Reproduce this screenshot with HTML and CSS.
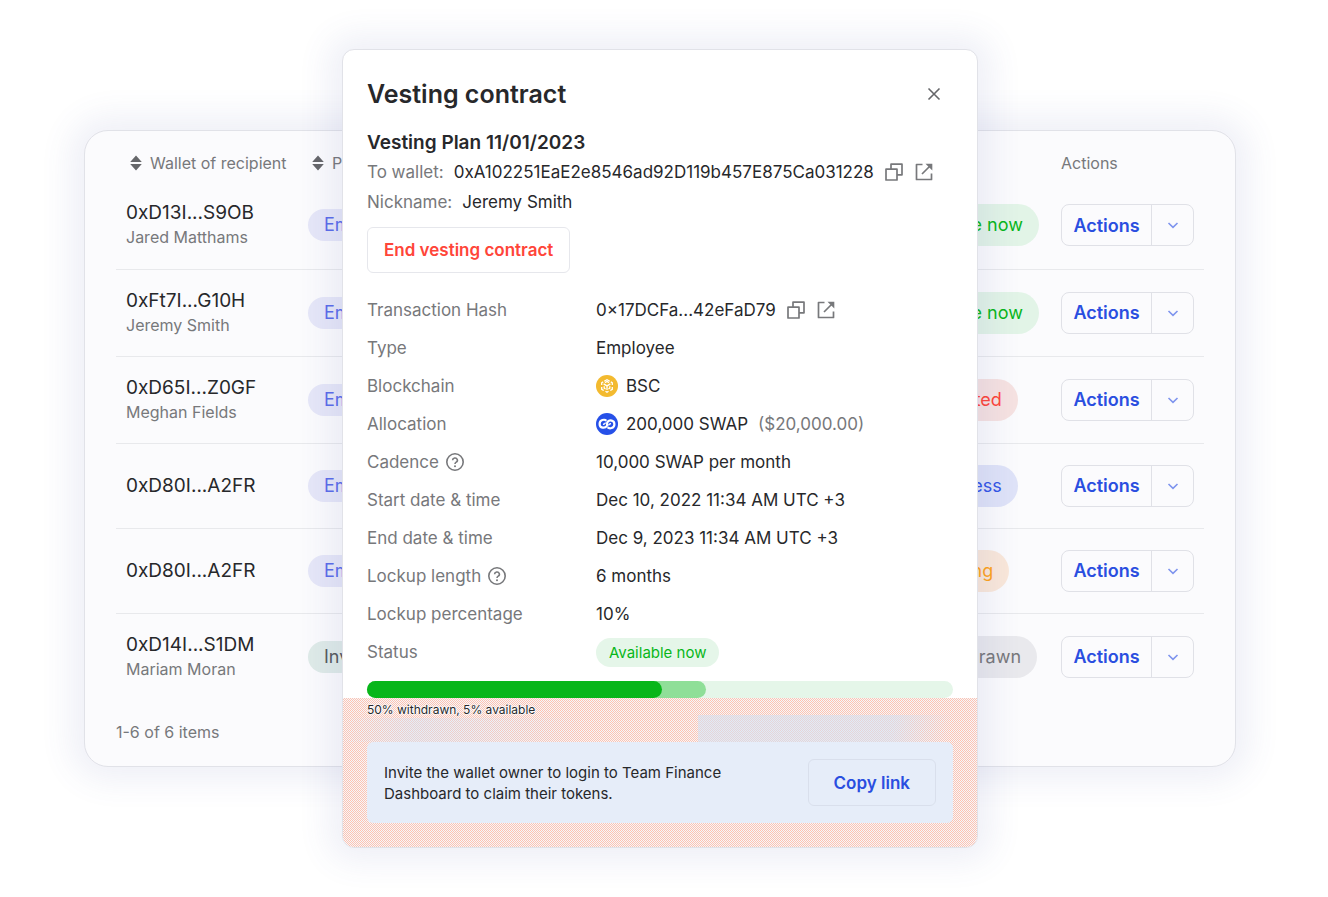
FILE: index.html
```
<!DOCTYPE html>
<html lang="en">

<head>
    <meta charset="UTF-8">
    <meta name="viewport" content="width=device-width, initial-scale=1.0">
    <title>Vesting contract</title>
    <link rel="stylesheet" href="styles.css">
</head>

<body>
    <!-- shared icons -->
    <svg class="sprite" aria-hidden="true">
        <symbol id="sort" viewBox="0 0 12 16">
            <path d="M6 0.500L11.800 7H.2zM6 15.500L.2 9h11.600z" fill="currentColor" />
        </symbol>
        <symbol id="chevron" viewBox="0 0 12 12">
            <path d="M1.500 4L6 8.300 10.500 4" fill="none" stroke="currentColor" stroke-width="1.600" />
        </symbol>
        <symbol id="copy" viewBox="0 0 20 20">
            <path d="M7 7V2.200h11v10.600h-4.800M2 7.200h11V18H2z" fill="none" stroke="currentColor" stroke-width="1.700" stroke-linejoin="round" />
        </symbol>
        <symbol id="open" viewBox="0 0 20 20">
            <path d="M8.500 2.500H2.500v15h15V11.500M8 12l8-8" fill="none" stroke="currentColor" stroke-width="1.700" stroke-linejoin="round" />
            <path d="M11.500 1.700H18.300V8.500z" fill="currentColor" />
        </symbol>
        <symbol id="help" viewBox="0 0 20 20">
            <circle cx="10" cy="10" r="8.200" fill="none" stroke="currentColor" stroke-width="1.600" />
            <path d="M7.600 8.200a2.400 2.200 0 1 1 3.600 1.900c-.9.6-1.200.9-1.200 1.900" fill="none" stroke="currentColor" stroke-width="1.600" />
            <circle cx="10" cy="14.200" r="1" fill="currentColor" />
        </symbol>
    </svg>

    <div class="scene">
        <section class="card">
            <table class="recipients">
                <colgroup>
                    <col class="col-wallet">
                    <col>
                    <col class="col-status">
                    <col class="col-actions">
                </colgroup>
                <thead>
                    <tr>
                        <th><span class="sort"><svg><use href="#sort" /></svg>Wallet of recipient</span></th>
                        <th><span class="sort"><svg><use href="#sort" /></svg>Plan</span></th>
                        <th></th>
                        <th>Actions</th>
                    </tr>
                </thead>
                <tbody>
                    <tr class="named">
                        <td class="wallet">0xD13I...S9OB<small>Jared Matthams</small></td>
                        <td><span class="tag">Emp</span></td>
                        <td><span class="state green">Available now</span></td>
                        <td><div class="split"><button>Actions</button><button aria-label="More actions"><svg><use href="#chevron" /></svg></button></div></td>
                    </tr>
                    <tr class="named">
                        <td class="wallet">0xFt7I...G10H<small>Jeremy Smith</small></td>
                        <td><span class="tag">Emp</span></td>
                        <td><span class="state green">Available now</span></td>
                        <td><div class="split"><button>Actions</button><button aria-label="More actions"><svg><use href="#chevron" /></svg></button></div></td>
                    </tr>
                    <tr class="named">
                        <td class="wallet">0xD65I...Z0GF<small>Meghan Fields</small></td>
                        <td><span class="tag">Emp</span></td>
                        <td><span class="state red">Terminated</span></td>
                        <td><div class="split"><button>Actions</button><button aria-label="More actions"><svg><use href="#chevron" /></svg></button></div></td>
                    </tr>
                    <tr>
                        <td class="wallet">0xD80I...A2FR</td>
                        <td><span class="tag">Emp</span></td>
                        <td><span class="state blue">In progress</span></td>
                        <td><div class="split"><button>Actions</button><button aria-label="More actions"><svg><use href="#chevron" /></svg></button></div></td>
                    </tr>
                    <tr>
                        <td class="wallet">0xD80I...A2FR</td>
                        <td><span class="tag">Emp</span></td>
                        <td><span class="state orange">Upcoming</span></td>
                        <td><div class="split"><button>Actions</button><button aria-label="More actions"><svg><use href="#chevron" /></svg></button></div></td>
                    </tr>
                    <tr class="named">
                        <td class="wallet">0xD14I...S1DM<small>Mariam Moran</small></td>
                        <td><span class="tag investor">Inv</span></td>
                        <td><span class="state grey">All withdrawn</span></td>
                        <td><div class="split"><button>Actions</button><button aria-label="More actions"><svg><use href="#chevron" /></svg></button></div></td>
                    </tr>
                </tbody>
            </table>
            <p class="count">1-6 of 6 items</p>
        </section>

        <section class="modal" role="dialog" aria-labelledby="title">
            <div class="modal-main">
                <header class="modal-head">
                    <h1 id="title">Vesting contract</h1>
                    <button class="close" aria-label="Close">
                        <svg viewBox="0 0 14 14"><path d="M1.500 1.500l11 11M12.500 1.500l-11 11" stroke="currentColor" stroke-width="1.600" /></svg>
                    </button>
                </header>
                <h2>Vesting Plan 11/01/2023</h2>
                <p class="line"><span class="muted">To wallet:</span> <span>0xA102251EaE2e8546ad92D119b457E875Ca031228</span>
                    <button class="icon" aria-label="Copy"><svg><use href="#copy" /></svg></button>
                    <button class="icon" aria-label="Open"><svg><use href="#open" /></svg></button>
                </p>
                <p class="line"><span class="muted">Nickname:</span> <span>Jeremy Smith</span></p>
                <button class="end">End vesting contract</button>

                <dl class="details">
                    <dt>Transaction Hash</dt>
                    <dd>0×17DCFa...42eFaD79
                        <button class="icon" aria-label="Copy"><svg><use href="#copy" /></svg></button>
                        <button class="icon" aria-label="Open"><svg><use href="#open" /></svg></button>
                    </dd>
                    <dt>Type</dt>
                    <dd>Employee</dd>
                    <dt>Blockchain</dt>
                    <dd>
                        <svg class="coin" viewBox="0 0 22 22">
                            <circle cx="11" cy="11" r="11" fill="#f3ba2f" />
                            <g fill="none" stroke="#fff" stroke-width="1.300">
                                <path d="M8.200 6.300L11 4.700l2.800 1.600M5.700 10V7.800l1.500-.9M16.300 10V7.800l-1.500-.9M5.700 12v2.300l2 1.200M16.300 12v2.300l-2 1.200M9.500 16.300l1.500.9 1.500-.9" />
                                <path d="M7.600 8.900L11 10.900l3.400-2M11 10.900v4.200M9 7.600l2-1.100 2 1.100M8.200 11.300v1.900l1.400.8M13.800 11.300v1.900l-1.400.8" />
                            </g>
                        </svg>
                        BSC
                    </dd>
                    <dt>Allocation</dt>
                    <dd>
                        <svg class="coin" viewBox="0 0 22 22">
                            <circle cx="11" cy="11" r="11" fill="#2650e8" />
                            <path d="M10.400 7.800C8.700 5.900 3.600 6.600 3.600 10.900c0 4.400 5.400 4.600 7.100 2.200 1-1.500-.3-2.800 1-4.400C13.500 6.600 18.400 7.200 18.400 11.200c0 4.300-5.100 4.900-6.800 3" fill="none" stroke="#fff" stroke-width="2.200" />
                            <path d="M7 11.200c1.200.3 2-.6 2.600-1.500M15 10.800c-1.200-.3-2 .6-2.600 1.500" fill="none" stroke="#fff" stroke-width="1.300" />
                        </svg>
                        200,000 SWAP <span class="muted">($20,000.00)</span>
                    </dd>
                    <dt>Cadence <svg><use href="#help" /></svg></dt>
                    <dd>10,000 SWAP per month</dd>
                    <dt>Start date &amp; time</dt>
                    <dd>Dec 10, 2022 11:34 AM UTC +3</dd>
                    <dt>End date &amp; time</dt>
                    <dd>Dec 9, 2023 11:34 AM UTC +3</dd>
                    <dt>Lockup length <svg><use href="#help" /></svg></dt>
                    <dd>6 months</dd>
                    <dt>Lockup percentage</dt>
                    <dd>10%</dd>
                    <dt>Status</dt>
                    <dd><span class="available">Available now</span></dd>
                </dl>

                <div class="progress">
                    <div class="progress-available" style="width: 57.800%"></div>
                    <div class="progress-withdrawn" style="width: 50.300%"></div>
                </div>
            </div>

            <footer class="modal-foot">
                <p class="caption">50% withdrawn, 5% available</p>
                <div class="invite">
                    <p>Invite the wallet owner to login to Team Finance Dashboard to claim their tokens.</p>
                    <button class="copy-link">Copy link</button>
                </div>
            </footer>
        </section>
    </div>
</body>

</html>
```
FILE: styles.css
```
* {
    box-sizing: border-box;
}

body {
    margin: 0;
    background: #fff;
    color: #27282b;
    font-family: Inter, "Liberation Sans", sans-serif;
    font-size: 17px;
}

h1, h2, p, dl, dd {
    margin: 0;
}

button {
    font: inherit;
    background: none;
    border: 0;
    padding: 0;
    cursor: pointer;
}

.sprite {
    display: none;
}

.muted {
    color: #77787b;
}

/* card and modal share one grid cell, the modal lies on top */
.scene {
    display: grid;
    grid-template-columns: minmax(0, 1fr);
    place-items: center;
    min-height: 100vh;
    padding: 0 8px 0 0;
}

.card, .modal {
    grid-area: 1 / 1;
    border: 1px solid #e1e2e8;
    box-shadow: 0 0 32px 14px rgba(80, 90, 165, 0.09);
}

.card {
    width: calc(100% - 168px);
    max-width: 1152px;
    padding: 0 31px 22px;
    background: #fbfbfd;
    border-radius: 24px;
}

/* table */
.recipients {
    width: 100%;
    table-layout: fixed;
    border-collapse: collapse;
}

.col-wallet {
    width: 192px;
}

.col-status {
    width: 171px;
}

.col-actions {
    width: 143px;
}

th {
    padding: 22px 0 9px;
    font-size: 16px;
    font-weight: 400;
    line-height: 20px;
    text-align: left;
    color: #77787b;
}

.sort {
    display: flex;
    align-items: center;
    gap: 8px;
    padding-left: 4px;
}

th:first-child .sort {
    padding-left: 14px;
}

.sort svg {
    width: 12px;
    height: 16px;
    color: #66676a;
}

td {
    height: 85px;
    padding: 0;
    vertical-align: middle;
}

.named td {
    height: 87px;
}

tbody tr + tr {
    border-top: 1px solid #e8e9ec;
}

.wallet {
    padding-left: 10px;
    font-size: 19px;
    line-height: 24px;
}

.wallet small {
    display: block;
    font-size: 16px;
    color: #77787b;
}

.tag, .state {
    display: inline-block;
    padding: 0 16px;
    border-radius: 22px;
    font-size: 18px;
    vertical-align: middle;
}

.tag {
    line-height: 32px;
    background: #e6e7f8;
    color: #5a6cea;
}

.investor {
    background: #dfebe8;
    color: #55595c;
}

.state {
    line-height: 42px;
}

.green {
    background: #e2f4e7;
    color: #08b61a;
}

.red {
    background: #f6e2e1;
    color: #ff4539;
}

.blue {
    background: #dfe3f8;
    color: #3355e6;
}

.orange {
    background: #fae8da;
    color: #ffa21a;
}

.grey {
    background: #e9e9ed;
    color: #77787b;
}

.split {
    display: flex;
    width: 133px;
    height: 42px;
    border: 1px solid #e0e1e7;
    border-radius: 8px;
}

.split button:first-child {
    width: 90px;
    font-size: 18px;
    font-weight: 600;
    color: #2a4ee0;
    border-right: 1px solid #e0e1e7;
}

.split button:last-child {
    display: grid;
    flex: 1;
    place-items: center;
    color: #7e94ee;
}

.split svg {
    width: 12px;
    height: 12px;
}

.count {
    margin-top: 20px;
    font-size: 16px;
    line-height: 24px;
    color: #77787b;
}

/* modal */
.modal {
    width: 636px;
    max-width: 100%;
    background: #fff;
    border-radius: 12px;
    overflow: hidden;
}

.modal-main {
    padding: 24px 24px 0;
}

.modal-head {
    display: flex;
    align-items: center;
    justify-content: space-between;
    padding-right: 12px;
    margin-bottom: 15px;
}

h1 {
    font-size: 25px;
    font-weight: 600;
    line-height: 40px;
}

.close {
    display: flex;
    color: #66676a;
}

.close svg {
    width: 14px;
    height: 14px;
}

h2 {
    font-size: 19px;
    font-weight: 600;
    line-height: 28px;
}

.line {
    display: flex;
    align-items: center;
    gap: 10px;
    line-height: 30px;
}

.icon {
    display: flex;
    color: #77787b;
}

.icon svg, .details dt svg {
    width: 20px;
    height: 20px;
}

.end {
    height: 46px;
    margin: 10px 0 18px;
    padding: 0 16px;
    border: 1px solid #e6e7ec;
    border-radius: 6px;
    font-weight: 600;
    color: #ff4539;
}

.details {
    display: grid;
    grid-template-columns: 229px 1fr;
    grid-auto-rows: 38px;
    align-items: center;
}

.details dt, .details dd {
    display: flex;
    align-items: center;
}

.details dt {
    gap: 6px;
    color: #77787b;
}

.details dd {
    gap: 10px;
}

.coin {
    width: 22px;
    height: 22px;
    margin-right: -2px;
}

.available {
    padding: 0 13px;
    border-radius: 15px;
    font-size: 15px;
    line-height: 29px;
    background: #e5f6e9;
    color: #08b61a;
}

/* the filled bars are stacked in the same cell of the track */
.progress {
    display: grid;
    height: 17px;
    margin-top: 10px;
    border-radius: 9px;
    background: #e5f6e9;
}

.progress div {
    grid-area: 1 / 1;
    border-radius: 9px;
}

.progress-available {
    background: #8fdf98;
}

.progress-withdrawn {
    background: #08b61a;
}

/* fine pink and white weave, cooler in two patches under the bar */
.modal-foot {
    padding: 0 24px 24px;
    background:
        linear-gradient(100deg, rgba(214, 226, 243, 0) 0, rgba(214, 226, 243, 0.5) 30%, rgba(214, 226, 243, 0) 100%) 0 20px / 38% 24px no-repeat,
        linear-gradient(100deg, rgba(214, 226, 243, 0.6) 0 70%, rgba(214, 226, 243, 0) 90%) 100% 17px / 44% 27px no-repeat,
        repeating-conic-gradient(#ffc2b0 0 25%, #f4f7fb 0 50%) 0 0 / 2px 2px;
}

.caption {
    margin-bottom: 20px;
    font-size: 12px;
    line-height: 24px;
    text-shadow: 0 0 1px #fff, 0 0 2px #fff, 0 0 2px #fff, 0 0 2px #fff, 0 0 2px #fff;
}

.invite {
    display: flex;
    align-items: center;
    justify-content: space-between;
    gap: 16px;
    padding: 17px;
    border-radius: 6px;
    background: #e6edf9;
}

.invite p {
    max-width: 350px;
    font-size: 15px;
    line-height: 21px;
}

.copy-link {
    flex: none;
    height: 47px;
    padding: 0 25px;
    border: 1px solid #d9dfec;
    border-radius: 6px;
    font-weight: 600;
    color: #2a4ee0;
}
```
